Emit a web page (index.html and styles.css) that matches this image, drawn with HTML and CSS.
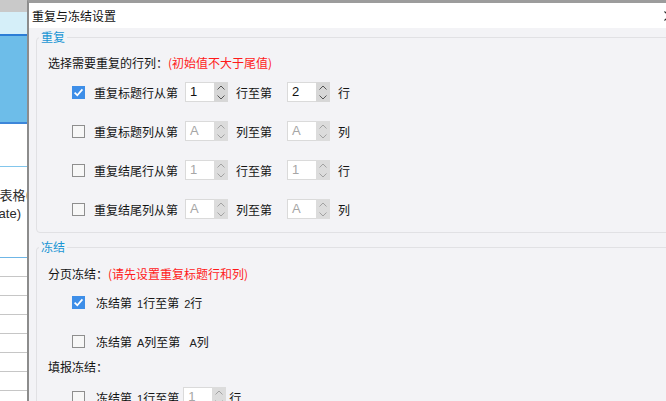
FILE: index.html
```html
<!DOCTYPE html>
<html lang="zh-CN">
<head>
    <meta charset="UTF-8">
    <meta name="viewport" content="width=device-width, initial-scale=1.0">
    <title>重复与冻结设置</title>
    <link rel="stylesheet" href="styles.css">
</head>
<body>
<div class="screen">
    <!-- fond : la feuille derrière la boîte de dialogue -->
    <div class="backdrop">
        <div class="bd-gray"></div>
        <div class="bd-cyan"></div>
        <div class="bd-blue"></div>
        <div class="bd-white"></div>
        <div class="bd-text">
            <span class="bd-line bd-line-1">模板表格(</span>
            <span class="bd-line bd-line-2">(template)</span>
        </div>
        <div class="bd-row"></div>
        <div class="bd-row"></div>
        <div class="bd-row"></div>
        <div class="bd-row"></div>
        <div class="bd-row"></div>
        <div class="bd-row"></div>
        <div class="bd-row"></div>
    </div>

    <div class="dialog">
        <div class="titlebar">
            <span class="title">重复与冻结设置</span>
            <svg class="close" width="10" height="10" viewBox="0 0 10 10">
                <path d="M0.5 0.5 L9.5 9.5 M9.5 0.5 L0.5 9.5" stroke="#222" stroke-width="1.1" fill="none"/>
            </svg>
        </div>

        <div class="dialog-body">
            <fieldset class="group group-repeat">
                <legend>重复</legend>
                <div class="intro">选择需要重复的行列：<span class="hint">(初始值不大于尾值)</span></div>

                <div class="opt opt-first">
                    <span class="check checked"><svg width="13" height="13" viewBox="0 0 13 13"><path d="M2.6 6.6 L5.3 9.2 L10.4 3.4" stroke="#fff" stroke-width="1.7" fill="none"/></svg></span>
                    <span class="label">重复标题行从第</span>
                    <span class="spin"><span class="spin-field">1</span><span class="spin-btns"><svg width="8" height="5" viewBox="0 0 8 5"><path d="M0.5 4.5 L4 1 L7.5 4.5" stroke="#555" fill="none"/></svg><svg width="8" height="5" viewBox="0 0 8 5"><path d="M0.5 0.5 L4 4 L7.5 0.5" stroke="#555" fill="none"/></svg></span></span>
                    <span class="label label-mid">行至第</span>
                    <span class="spin"><span class="spin-field">2</span><span class="spin-btns"><svg width="8" height="5" viewBox="0 0 8 5"><path d="M0.5 4.5 L4 1 L7.5 4.5" stroke="#555" fill="none"/></svg><svg width="8" height="5" viewBox="0 0 8 5"><path d="M0.5 0.5 L4 4 L7.5 0.5" stroke="#555" fill="none"/></svg></span></span>
                    <span class="label label-end">行</span>
                </div>

                <div class="opt">
                    <span class="check"></span>
                    <span class="label">重复标题列从第</span>
                    <span class="spin disabled"><span class="spin-field">A</span><span class="spin-btns"><svg width="8" height="5" viewBox="0 0 8 5"><path d="M0.5 4.5 L4 1 L7.5 4.5" stroke="#a2a2a2" fill="none"/></svg><svg width="8" height="5" viewBox="0 0 8 5"><path d="M0.5 0.5 L4 4 L7.5 0.5" stroke="#a2a2a2" fill="none"/></svg></span></span>
                    <span class="label label-mid">列至第</span>
                    <span class="spin disabled"><span class="spin-field">A</span><span class="spin-btns"><svg width="8" height="5" viewBox="0 0 8 5"><path d="M0.5 4.5 L4 1 L7.5 4.5" stroke="#a2a2a2" fill="none"/></svg><svg width="8" height="5" viewBox="0 0 8 5"><path d="M0.5 0.5 L4 4 L7.5 0.5" stroke="#a2a2a2" fill="none"/></svg></span></span>
                    <span class="label label-end">列</span>
                </div>

                <div class="opt">
                    <span class="check"></span>
                    <span class="label">重复结尾行从第</span>
                    <span class="spin disabled"><span class="spin-field">1</span><span class="spin-btns"><svg width="8" height="5" viewBox="0 0 8 5"><path d="M0.5 4.5 L4 1 L7.5 4.5" stroke="#a2a2a2" fill="none"/></svg><svg width="8" height="5" viewBox="0 0 8 5"><path d="M0.5 0.5 L4 4 L7.5 0.5" stroke="#a2a2a2" fill="none"/></svg></span></span>
                    <span class="label label-mid">行至第</span>
                    <span class="spin disabled"><span class="spin-field">1</span><span class="spin-btns"><svg width="8" height="5" viewBox="0 0 8 5"><path d="M0.5 4.5 L4 1 L7.5 4.5" stroke="#a2a2a2" fill="none"/></svg><svg width="8" height="5" viewBox="0 0 8 5"><path d="M0.5 0.5 L4 4 L7.5 0.5" stroke="#a2a2a2" fill="none"/></svg></span></span>
                    <span class="label label-end">行</span>
                </div>

                <div class="opt">
                    <span class="check"></span>
                    <span class="label">重复结尾列从第</span>
                    <span class="spin disabled"><span class="spin-field">A</span><span class="spin-btns"><svg width="8" height="5" viewBox="0 0 8 5"><path d="M0.5 4.5 L4 1 L7.5 4.5" stroke="#a2a2a2" fill="none"/></svg><svg width="8" height="5" viewBox="0 0 8 5"><path d="M0.5 0.5 L4 4 L7.5 0.5" stroke="#a2a2a2" fill="none"/></svg></span></span>
                    <span class="label label-mid">列至第</span>
                    <span class="spin disabled"><span class="spin-field">A</span><span class="spin-btns"><svg width="8" height="5" viewBox="0 0 8 5"><path d="M0.5 4.5 L4 1 L7.5 4.5" stroke="#a2a2a2" fill="none"/></svg><svg width="8" height="5" viewBox="0 0 8 5"><path d="M0.5 0.5 L4 4 L7.5 0.5" stroke="#a2a2a2" fill="none"/></svg></span></span>
                    <span class="label label-end">列</span>
                </div>
            </fieldset>

            <fieldset class="group group-freeze">
                <legend>冻结</legend>
                <div class="intro intro-page">分页冻结：<span class="hint">(请先设置重复标题行和列)</span></div>

                <div class="opt freeze opt-page-1">
                    <span class="check checked"><svg width="13" height="13" viewBox="0 0 13 13"><path d="M2.6 6.6 L5.3 9.2 L10.4 3.4" stroke="#fff" stroke-width="1.7" fill="none"/></svg></span>
                    <span class="label">冻结第<span class="num">1</span>行至第<span class="num">2</span>行</span>
                </div>

                <div class="opt freeze opt-page-2">
                    <span class="check"></span>
                    <span class="label">冻结第<span class="num">A</span>列至第<span class="num num-wide">A</span>列</span>
                </div>

                <div class="intro intro-fill">填报冻结：</div>

                <div class="opt freeze opt-fill">
                    <span class="check"></span>
                    <span class="label">冻结第<span class="num">1</span>行至第</span>
                    <span class="spin disabled spin-tight"><span class="spin-field">1</span><span class="spin-btns"><svg width="8" height="5" viewBox="0 0 8 5"><path d="M0.5 4.5 L4 1 L7.5 4.5" stroke="#a2a2a2" fill="none"/></svg><svg width="8" height="5" viewBox="0 0 8 5"><path d="M0.5 0.5 L4 4 L7.5 0.5" stroke="#a2a2a2" fill="none"/></svg></span></span>
                    <span class="label label-tail">行</span>
                </div>
            </fieldset>
        </div>
    </div>
</div>
</body>
</html>
```

FILE: styles.css
```css
/* Page */
body {
    margin: 0;
    font-family: "Noto Sans CJK SC", "Liberation Sans", sans-serif;
    font-size: 12px;
    color: #141414;
}

.screen {
    display: flex;
    width: 666px;
    height: 401px;
    overflow: hidden;
}

/* Fond : feuille de calcul derrière */
.backdrop {
    width: 27px;
    flex: none;
    display: flex;
    flex-direction: column;
    background: #fff;
    overflow: hidden;
}

.bd-gray {
    height: 12px;
    background: #c9c9c9;
}

.bd-cyan {
    height: 22px;
    background: #d5eff9;
}

.bd-blue {
    height: 86px;
    background: #6dbde9;
    border-top: 2px solid #2b7dd6;
    border-bottom: 2px solid #3d86d9;
}

.bd-white {
    height: 42px;
}

.bd-text {
    height: 92px;
    border-top: 1px solid #82c6ec;
    border-bottom: 1px solid #6fb6e6;
    padding-top: 18px;
    box-sizing: border-box;
    display: flex;
    flex-direction: column;
    align-items: flex-end;
    font-size: 13px;
    line-height: 19px;
    color: #2a2a2a;
}

.bd-line {
    white-space: nowrap;
}

.bd-line-1 {
    margin-right: -3px;
}

.bd-line-2 {
    margin-right: 6px;
    font-family: "Liberation Sans", sans-serif;
}

.bd-row {
    height: 18px;
    flex: none;
    border-bottom: 1px solid #c6c6c6;
}

/* Boîte de dialogue */
.dialog {
    width: 657px;
    flex: none;
    background: #f3f3f6;
    border-top: 3px solid #9c9c9c;
    border-left: 2px solid #8c8c8c;
}

.titlebar {
    height: 25px;
    background: #fff;
    display: flex;
    align-items: center;
    justify-content: space-between;
    padding: 0 12px 0 3px;
}

.title {
    color: #111;
}

.dialog-body {
    padding: 1px 0 0 7px;
}

/* Groupes */
.group {
    margin: 0;
    padding: 0 0 13px 11px;
    border: 1px solid #e1e1e4;
    border-radius: 4px;
}

.group legend {
    margin-left: -9px;
    padding: 0 2px;
    line-height: 16px;
    color: #1a96d4;
}

.group-freeze {
    margin-top: 6px;
    border-bottom: none;
}

.intro {
    height: 20px;
    line-height: 20px;
    margin-top: 8px;
}

.intro-page {
    margin-top: 9px;
}

.intro-fill {
    margin-top: 6px;
}

.hint {
    color: #ff1a1a;
}

/* Lignes d'options */
.opt {
    display: flex;
    align-items: center;
    height: 20px;
    margin-left: 24px;
    margin-top: 19px;
    white-space: nowrap;
}

.opt-first {
    margin-top: 9px;
}

.opt-page-1 {
    margin-top: 8px;
}

.opt-fill {
    margin-top: 10px;
}

.check {
    width: 13px;
    height: 13px;
    box-sizing: border-box;
    border: 1px solid #8e8e8e;
    background: #f7f7f7;
    margin-right: 9px;
    flex: none;
}

.check.checked {
    border: none;
    background: #3d8ee8;
}

.check svg {
    display: block;
}

.freeze .check {
    margin-right: 11px;
}

.label-mid {
    margin: 0 8px;
}

.label-end {
    margin-left: 8px;
}

.label-tail {
    margin-left: 3px;
}

.num {
    font-family: "Liberation Sans", sans-serif;
    font-size: 11px;
    padding-left: 5px;
    color: #222;
}

.num-wide {
    padding-left: 9px;
}

/* Champ numérique avec flèches */
.spin {
    display: flex;
    height: 20px;
    margin-left: 7px;
}

.spin-tight {
    margin-left: 4px;
}

.spin-field {
    width: 29px;
    box-sizing: border-box;
    background: #fff;
    border: 1px solid #dadada;
    border-right: none;
    padding-left: 4px;
    font-family: "Liberation Sans", sans-serif;
    font-size: 13px;
    line-height: 18px;
    color: #111;
}

.spin-btns {
    width: 14px;
    background: #d7d7d7;
    display: flex;
    flex-direction: column;
    align-items: center;
    justify-content: space-around;
}

.spin-btns svg {
    display: block;
}

.disabled .spin-field {
    color: #a6a6a6;
}

.disabled .spin-btns {
    background: #dcdcdc;
}
```
